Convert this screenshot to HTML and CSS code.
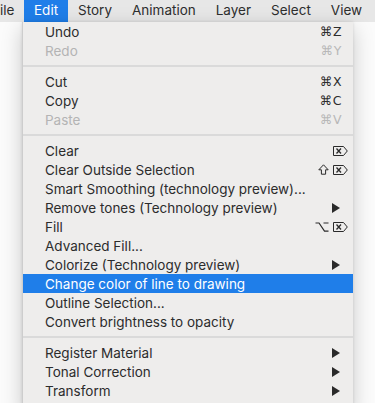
FILE: index.html
```html
<!DOCTYPE html>
<html>
<head>
<meta charset="utf-8">
<link rel="stylesheet" href="styles.css">
</head>
<body>
<div class="screen">
  <nav class="menubar">
    <span class="mb-item mb-file">ile</span>
    <span class="mb-item active">Edit</span>
    <span class="mb-item">Story</span>
    <span class="mb-item">Animation</span>
    <span class="mb-item">Layer</span>
    <span class="mb-item">Select</span>
    <span class="mb-item">View</span>
  </nav>
  <div class="desk"></div>
  <div class="menu">
    <div class="row"><span class="label">Undo</span><span class="key">⌘Z</span></div>
    <div class="row disabled"><span class="label">Redo</span><span class="key">⌘Y</span></div>
    <div class="sep"></div>
    <div class="row"><span class="label">Cut</span><span class="key">⌘X</span></div>
    <div class="row"><span class="label">Copy</span><span class="key">⌘C</span></div>
    <div class="row disabled"><span class="label">Paste</span><span class="key">⌘V</span></div>
    <div class="sep"></div>
    <div class="row"><span class="label">Clear</span><span class="key wide"><svg class="del" viewBox="0 0 15 10" width="15" height="10"><path d="M0.5 0.5H10.5L14.3 5L10.5 9.5H0.5Z" fill="none" stroke="#2a2a2a" stroke-width="1"/><path d="M3.5 2.5L8 7.5M8 2.5L3.5 7.5" stroke="#2a2a2a" stroke-width="1.3"/></svg></span></div>
    <div class="row"><span class="label">Clear Outside Selection</span><span class="key wide"><svg class="mod" viewBox="0 0 11 11" width="11" height="11"><path d="M5.5 0.8L10.2 5.8H7.6V10.2H3.4V5.8H0.8Z" fill="none" stroke="#2a2a2a" stroke-width="1"/></svg><svg class="del" viewBox="0 0 15 10" width="15" height="10"><path d="M0.5 0.5H10.5L14.3 5L10.5 9.5H0.5Z" fill="none" stroke="#2a2a2a" stroke-width="1"/><path d="M3.5 2.5L8 7.5M8 2.5L3.5 7.5" stroke="#2a2a2a" stroke-width="1.3"/></svg></span></div>
    <div class="row"><span class="label">Smart Smoothing (technology preview)...</span></div>
    <div class="row"><span class="label">Remove tones (Technology preview)</span><span class="arrow"></span></div>
    <div class="row"><span class="label">Fill</span><span class="key wide"><svg class="mod" viewBox="0 0 14 10" width="14" height="10"><path d="M0.5 1H4L9.5 9.2H13.5M8.5 1H13.5" fill="none" stroke="#2a2a2a" stroke-width="1.2"/></svg><svg class="del" viewBox="0 0 15 10" width="15" height="10"><path d="M0.5 0.5H10.5L14.3 5L10.5 9.5H0.5Z" fill="none" stroke="#2a2a2a" stroke-width="1"/><path d="M3.5 2.5L8 7.5M8 2.5L3.5 7.5" stroke="#2a2a2a" stroke-width="1.3"/></svg></span></div>
    <div class="row"><span class="label">Advanced Fill...</span></div>
    <div class="row"><span class="label">Colorize (Technology preview)</span><span class="arrow"></span></div>
    <div class="row selected"><span class="label">Change color of line to drawing</span></div>
    <div class="row"><span class="label">Outline Selection...</span></div>
    <div class="row"><span class="label">Convert brightness to opacity</span></div>
    <div class="sep"></div>
    <div class="row"><span class="label">Register Material</span><span class="arrow"></span></div>
    <div class="row"><span class="label">Tonal Correction</span><span class="arrow"></span></div>
    <div class="row"><span class="label">Transform</span><span class="arrow"></span></div>
  </div>
</div>
</body>
</html>
```
FILE: styles.css
```css
html, body {
  margin: 0;
  padding: 0;
  background: #fbfbfb;
}
.screen {
  position: relative;
  width: 375px;
  height: 403px;
  overflow: hidden;
  font-family: Inter, "Liberation Sans", sans-serif;
  font-size: 13.5px;
  color: #2c2c2c;
}
.menubar {
  height: 22px;
  background: #e7e7e7;
  display: flex;
  align-items: center;
  white-space: nowrap;
}
.mb-item {
  height: 22px;
  line-height: 21px;
  padding: 0 10px;
  color: #2e2e2e;
}
.mb-file {
  padding-left: 0;
  padding-right: 10px;
  width: 14px;
}
.mb-item.active {
  background: #1f7ee9;
  color: #fff;
}
.desk {
  height: 381px;
  background: #fbfbfb;
}
.menu {
  position: absolute;
  left: 22px;
  top: 22px;
  width: 330px;
  height: 390px;
  padding-top: 0;
  background: #eeedec;
  border-left: 1px solid #cdcdcd;
  box-shadow: 0 6px 20px rgba(0,0,0,0.2), 0 0 3px rgba(0,0,0,0.12);
}
.row {
  height: 19px;
  display: flex;
  align-items: center;
  padding: 0 11px 0 22px;
  white-space: nowrap;
}
.label {
  flex: 1;
}
.key {
  color: #2e2e2e;
  letter-spacing: 0.5px;
  font-family: "DejaVu Sans", Inter, sans-serif;
  font-size: 12.5px;
  display: flex;
  align-items: center;
  gap: 4px;
}
.key.wide {
  margin-right: -6px;
}
.key svg {
  display: block;
}
.disabled {
  color: #b4b4b4;
}
.disabled .key {
  color: #b8b8b8;
}
.selected {
  background: #1f7ee9;
  color: #fff;
}
.arrow {
  width: 0;
  height: 0;
  border-top: 5px solid transparent;
  border-bottom: 5px solid transparent;
  border-left: 8px solid #2a2a2a;
  margin-right: 2px;
}
.sep {
  height: 12px;
  display: flex;
  align-items: center;
}
.sep::before {
  content: "";
  display: block;
  width: 100%;
  height: 2px;
  background: #dadada;
}
```
